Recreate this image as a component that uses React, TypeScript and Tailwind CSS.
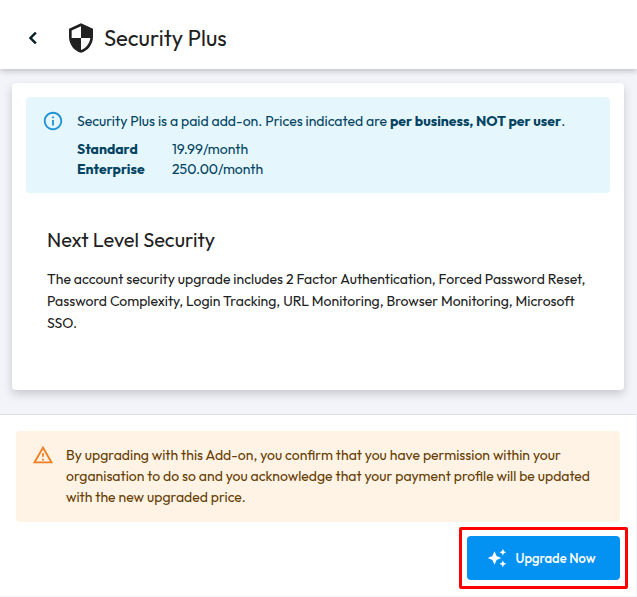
import React from "react";

const plans = [
  { name: "Standard", price: "19.99/month" },
  { name: "Enterprise", price: "250.00/month" },
];

function Icon({ path, className }: { path: string; className: string }) {
  return (
    <svg viewBox="0 0 24 24" fill="currentColor" aria-hidden="true" className={className}>
      <path d={path} />
    </svg>
  );
}

const CHEVRON = "M15.41 7.41 14 6l-6 6 6 6 1.41-1.41L10.83 12z";
const SHIELD =
  "M12 1 3 5v6c0 5.55 3.84 10.74 9 12 5.16-1.26 9-6.45 9-12V5l-9-4zm0 10.99h7c-.53 4.12-3.28 7.79-7 8.94V12H5V6.3l7-3.11v8.8z";
const INFO =
  "M11 7h2v2h-2zm0 4h2v6h-2zm1-9C6.48 2 2 6.48 2 12s4.48 10 10 10 10-4.48 10-10S17.52 2 12 2zm0 18c-4.41 0-8-3.59-8-8s3.59-8 8-8 8 3.59 8 8-3.59 8-8 8z";
const WARNING =
  "M12 5.99 19.53 19H4.47L12 5.99M12 2 1 21h22L12 2zm1 14h-2v2h2v-2zm0-6h-2v4h2v-4z";
const SPARKLES =
  "m19 9 1.25-2.75L23 5l-2.75-1.25L19 1l-1.25 2.75L15 5l2.75 1.25L19 9zm-7.5.5L9 4 6.5 9.5 1 12l5.5 2.5L9 20l2.5-5.5L17 12l-5.5-2.5zM19 15l-1.25 2.75L15 19l2.75 1.25L19 23l1.25-2.75L23 19l-2.75-1.25L19 15z";

export default function App() {
  return (
    <div className="bg-[#f3f4fa] pb-px font-['Outfit','Lato',sans-serif] text-sm text-[#212121]">
      <header className="flex h-[69px] items-center bg-white pt-1.5 pl-[21px] shadow-[0_2px_6px_rgba(0,0,0,0.22)]">
        <button type="button" aria-label="Back" className="text-[#041e2b]">
          <Icon path={CHEVRON} className="size-6 stroke-current stroke-[0.5]" />
        </button>
        <Icon path={SHIELD} className="ml-5 size-8" />
        <h1 className="ml-[7px] text-[22px] leading-8">Security Plus</h1>
      </header>

      <main className="pt-[14px] pr-[13px] pb-6 pl-3">
        <section className="rounded-[4px] bg-white p-[14px] pb-14 shadow-[0_4px_10px_rgba(0,0,0,0.18)]">
          <div className="flex h-24 rounded-[4px] bg-[#e5f6fd] pt-[13px] pl-4 text-[#014361]">
            <Icon path={INFO} className="size-[22px] shrink-0 text-[#1f93d8]" />
            <div className="ml-[13px]">
              <p className="leading-[23px]">
                Security Plus is a paid add-on. Prices indicated are{" "}
                <strong>per business, NOT per user</strong>.
              </p>
              <table className="mt-1.5 leading-5">
                <tbody>
                  {plans.map((plan) => (
                    <tr key={plan.name}>
                      <th scope="row" className="w-[95px] p-0 text-left font-bold">
                        {plan.name}
                      </th>
                      <td className="p-0">{plan.price}</td>
                    </tr>
                  ))}
                </tbody>
              </table>
            </div>
          </div>
          <div className="mt-8 px-[21px]">
            <h2 className="text-xl leading-[30px]">Next Level Security</h2>
            <p className="mt-[13px] leading-[22px]">
              The account security upgrade includes 2 Factor Authentication, Forced Password
              Reset, Password Complexity, Login Tracking, URL Monitoring, Browser Monitoring,
              Microsoft SSO.
            </p>
          </div>
        </section>
      </main>

      <footer className="mr-px border-t border-[#dedee2] bg-white px-4 pt-4 pb-[7px]">
        <div className="flex rounded-[4px] bg-[#fff3e5] px-4 pt-[13px] pb-[14px] text-[#663c00]">
          <Icon path={WARNING} className="size-[22px] shrink-0 text-[#f07f23]" />
          <p className="ml-3 pt-px leading-[21px]">
            By upgrading with this Add-on, you confirm that you have permission within your
            organisation to do so and you acknowledge that your payment profile will be updated
            with the new upgraded price.
          </p>
        </div>
        <div className="mt-[5px] -mr-2 flex justify-end">
          <div className="rounded-[2px] border-3 border-[#fe0000] px-[5px] py-[6px]">
            <button
              type="button"
              className="flex h-11 w-[153px] items-center justify-center gap-2 rounded-[4px] bg-[#0492f2] pr-1 text-[13px] font-medium text-white"
            >
              <Icon path={SPARKLES} className="size-5" />
              Upgrade Now
            </button>
          </div>
        </div>
      </footer>
    </div>
  );
}
